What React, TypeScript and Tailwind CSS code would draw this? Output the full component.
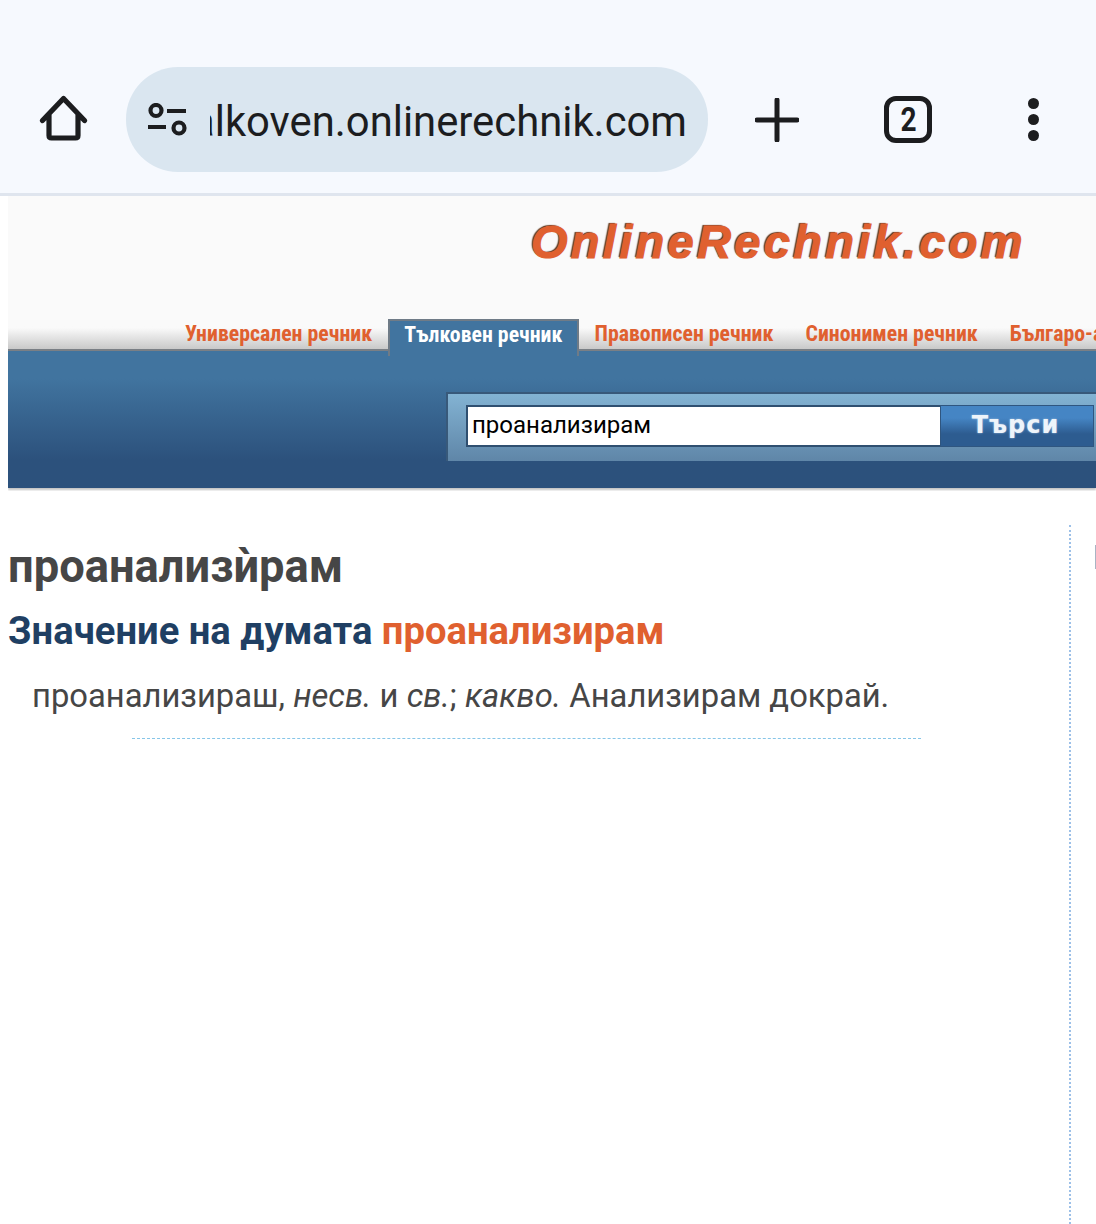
const tabs = [
  { label: "Универсален речник", active: false },
  { label: "Тълковен речник", active: true },
  { label: "Правописен речник", active: false },
  { label: "Синонимен речник", active: false },
  { label: "Българо-английски речник", active: false },
];

function HomeIcon() {
  return (
    <svg width="50" height="50" viewBox="0 0 50 50" fill="none" stroke="#1c1d1f" strokeWidth="5.2" strokeLinecap="round" strokeLinejoin="round">
      <path d="M4.5 25.5 25.5 3.5l21 22M11 20v20.5c0 1.6.9 2.5 2.5 2.5h24c1.6 0 2.5-.9 2.5-2.5V20" />
    </svg>
  );
}

function TuneIcon() {
  return (
    <svg width="42" height="34" viewBox="0 0 42 34" fill="none" stroke="#1c1d1f" strokeWidth="4.2">
      <circle cx="9" cy="7.5" r="5.5" />
      <circle cx="32" cy="25" r="5.5" />
      <path d="M20 8h19M1 24h18" />
    </svg>
  );
}

function PlusIcon() {
  return (
    <svg width="44" height="44" viewBox="0 0 44 44" fill="none" stroke="#1c1d1f" strokeWidth="5" strokeLinecap="round">
      <path d="M22 2v40M2 22h40" />
    </svg>
  );
}

function Toolbar() {
  return (
    <div className="h-[196px] shrink-0 border-b-[3px] border-[#dfe5ee] bg-[#f6f9fe] pt-[67px]">
      <div className="flex h-[105px] items-center">
        <div className="ml-[38px] w-[88px] shrink-0">
          <HomeIcon />
        </div>
        <div className="flex h-[105px] w-[582px] shrink-0 items-center overflow-hidden rounded-[52px] bg-[#dae6f0] pl-[21px] pr-[21px]">
          <TuneIcon />
          <div className="ml-[21px] flex-1 overflow-hidden pt-[4px] text-right font-['Roboto',sans-serif] text-[41.8px] leading-[54px] whitespace-nowrap text-[#1c1d1f]">
            <span className="float-right">talkoven.onlinerechnik.com</span>
          </div>
        </div>
        <div className="ml-[47px] shrink-0">
          <PlusIcon />
        </div>
        <div className="ml-[85px] flex h-[47px] w-[48px] shrink-0 items-center justify-center rounded-[12px] border-[5px] border-[#1c1d1f] font-['Roboto',sans-serif] text-[33px] font-bold text-[#1c1d1f]">
          <span className="scale-x-85">2</span>
        </div>
        <div className="ml-[96px] flex shrink-0 flex-col gap-[5px]">
          <div className="size-[11px] rounded-full bg-[#1c1d1f]" />
          <div className="size-[11px] rounded-full bg-[#1c1d1f]" />
          <div className="size-[11px] rounded-full bg-[#1c1d1f]" />
        </div>
      </div>
    </div>
  );
}

function SiteHeader() {
  return (
    <div className="ml-2 overflow-hidden pb-[3px]">
      <div className="h-[123px] bg-[#fafafa] pl-[523px] pt-[20px]">
        <div className="font-['Liberation_Sans',sans-serif] text-[47px] leading-[52px] font-bold tracking-[3.3px] whitespace-nowrap text-[#e0602f] italic [-webkit-text-stroke:1.2px_#e0602f] [text-shadow:-1.5px_-1px_1px_#5a3018]">
          OnlineRechnik.com
        </div>
      </div>
      <div className="relative z-10 flex h-[30px] bg-gradient-to-b from-[#fafafa] from-30% to-[#c9c9c9] pl-[161px] font-['Roboto',sans-serif] font-stretch-condensed">
        {tabs.map((tab) =>
          tab.active ? (
            <div key={tab.label} className="h-[37px] shrink-0 border-x-[2px] border-t-[2px] border-[#6f7b87] bg-[#41749f] px-[14px] pt-[2px] text-[21.8px] leading-[24px] font-bold whitespace-nowrap text-white">
              {tab.label}
            </div>
          ) : (
            <div key={tab.label} className="shrink-0 px-[16px] pt-[3px] text-[21.8px] leading-[24px] font-bold whitespace-nowrap text-[#e0602f]">
              {tab.label}
            </div>
          ),
        )}
      </div>
      <div className="h-[139px] border-t-[2px] border-[#7a7f85] bg-gradient-to-b from-[#41749f] from-20% to-[#2c517c] to-80% pl-[438px] pt-[41px] shadow-[0_2px_2px_#c4c4c4]">
        <div className="flex h-[69px] border-t-[2px] border-l-[2px] border-[#38597a] bg-gradient-to-b from-[#83b3d3] to-[#5f86a8] pl-[18px] pt-[11px]">
          <div className="flex h-[42px] w-[474px] shrink-0 items-center border-[2px] border-[#2f4f70] border-r-0 bg-white pb-[2px] pl-[4px] font-['Roboto',sans-serif] text-[24px] text-black">
            проанализирам
          </div>
          <div className="flex h-[42px] w-[154px] shrink-0 items-center justify-center border-[1px] border-[#2f5680] bg-gradient-to-b from-[#4585c4] from-30% to-[#2d5c90] to-70% pr-[3px] pb-[2px] font-['DejaVu_Sans',sans-serif] text-[24px] font-bold tracking-[1px] text-[#eef4fa] [text-shadow:0_0_2px_#a9c6e2]">
            Търси
          </div>
        </div>
      </div>
    </div>
  );
}

function Entry() {
  return (
    <div className="mt-[34px] ml-2 flex min-h-0 flex-1">
      <div className="w-[1063px] shrink-0 border-r-[2px] border-dotted border-[#9cc0e8] pt-[14px] pr-[2px]">
        <h1 className="font-['Roboto',sans-serif] text-[45.3px] leading-[56px] font-bold text-[#464646]">проанализѝрам</h1>
        <h2 className="mt-[10px] font-['Roboto',sans-serif] text-[38.2px] leading-[52px] font-bold text-[#1f3f63]">
          Значение на думата <span className="text-[#e0602f]">проанализирам</span>
        </h2>
        <p className="mt-[19px] pl-[24px] font-['Roboto',sans-serif] text-[32.75px] leading-[40px] text-[#464646]">
          проанализираш, <i>несв.</i> и <i>св.</i>; <i>какво.</i> Анализирам докрай.
        </p>
        <div className="mt-[22px] ml-[124px] w-[789px] border-t-[1px] border-dashed border-[#86c5e8]" />
      </div>
      <div className="ml-[24px] mt-[20px] h-[24px] w-[2px] bg-[#a8b4c4]" />
    </div>
  );
}

export default function App() {
  return (
    <div className="flex h-[1224px] w-[1096px] flex-col overflow-hidden bg-white">
      <Toolbar />
      <SiteHeader />
      <Entry />
    </div>
  );
}
